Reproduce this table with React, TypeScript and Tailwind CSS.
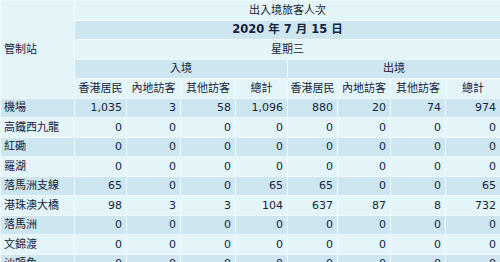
import React from "react";

const L = "bg-[#e3f5f9]";
const D = "bg-[#cde6f0]";

const rows: [string, string[]][] = [
  ["機場", ["1,035", "3", "58", "1,096", "880", "20", "74", "974"]],
  ["高鐵西九龍", ["0", "0", "0", "0", "0", "0", "0", "0"]],
  ["紅磡", ["0", "0", "0", "0", "0", "0", "0", "0"]],
  ["羅湖", ["0", "0", "0", "0", "0", "0", "0", "0"]],
  ["落馬洲支線", ["65", "0", "0", "65", "65", "0", "0", "65"]],
  ["港珠澳大橋", ["98", "3", "3", "104", "637", "87", "8", "732"]],
  ["落馬洲", ["0", "0", "0", "0", "0", "0", "0", "0"]],
  ["文錦渡", ["0", "0", "0", "0", "0", "0", "0", "0"]],
  ["沙頭角", ["0", "0", "0", "0", "0", "0", "0", "0"]],
];

const subs = ["香港居民", "內地訪客", "其他訪客", "總計", "香港居民", "內地訪客", "其他訪客", "總計"];
const widths = [74, 52, 54, 55, 52, 50, 53, 55, 55];

export default function App() {
  const cell = "border border-[#eefafd] h-[19.5px] p-0 leading-none";
  return (
    <div
      className="w-[500px] h-[262px] overflow-hidden bg-[#e3f5f9] text-[#16223d] text-[11px]"
      style={{ fontFamily: '"DejaVu Sans", "Noto Sans CJK TC", sans-serif' }}
    >
      <table className="w-[500px] table-fixed border-collapse">
        <colgroup>
          {widths.map((w, i) => (
            <col key={i} style={{ width: w }} />
          ))}
        </colgroup>
        <tbody>
          <tr>
            <td rowSpan={5} className={`${cell} ${L} text-left pl-[3px]`}>管制站</td>
            <td colSpan={8} className={`${cell} ${L} text-center`}>出入境旅客人次</td>
          </tr>
          <tr>
            <td colSpan={8} className={`${cell} ${D} text-center font-bold text-[11.5px]`}>2020 年 7 月 15 日</td>
          </tr>
          <tr>
            <td colSpan={8} className={`${cell} ${L} text-center`}>星期三</td>
          </tr>
          <tr>
            <td colSpan={4} className={`${cell} ${D} text-center`}>入境</td>
            <td colSpan={4} className={`${cell} ${D} text-center`}>出境</td>
          </tr>
          <tr>
            {subs.map((s, i) => (
              <td key={i} className={`${cell} ${L} text-center whitespace-nowrap`}>{s}</td>
            ))}
          </tr>
          {rows.map(([name, vals], r) => {
            const bg = r % 2 === 0 ? D : L;
            return (
              <tr key={name}>
                <td className={`${cell} ${bg} text-left pl-[3px] whitespace-nowrap`}>{name}</td>
                {vals.map((v, i) => (
                  <td key={i} className={`${cell} ${bg} text-right pr-[4px]`}>{v}</td>
                ))}
              </tr>
            );
          })}
        </tbody>
      </table>
    </div>
  );
}
